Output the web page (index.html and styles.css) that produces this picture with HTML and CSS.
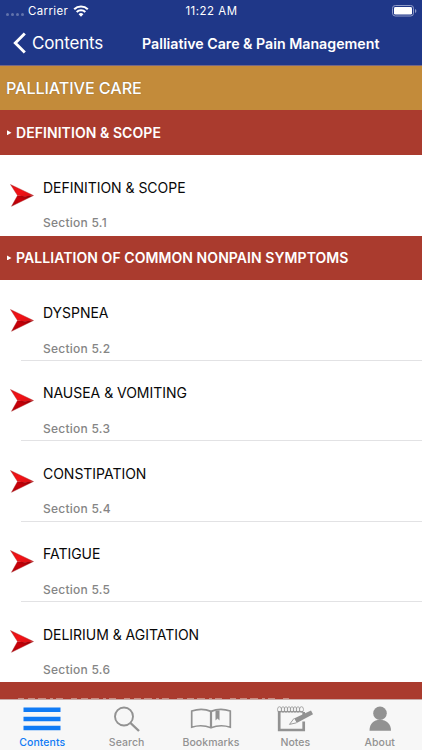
FILE: index.html
```
<!DOCTYPE html>
<html lang="en">
<head>
<meta charset="utf-8">
<title>Palliative Care &amp; Pain Management</title>
<link rel="stylesheet" href="styles.css">
</head>
<body>
<svg width="0" height="0" class="defs" aria-hidden="true">
  <defs>
    <linearGradient id="upper" x1="0" y1="0" x2="1" y2="1"><stop offset="0" stop-color="#e01014"/><stop offset=".5" stop-color="#f31216"/><stop offset="1" stop-color="#d81015"/></linearGradient>
    <linearGradient id="lower" x1="0" y1="1" x2="1" y2="0"><stop offset="0" stop-color="#a80008"/><stop offset=".5" stop-color="#cb0009"/><stop offset="1" stop-color="#8b0006"/></linearGradient>
    <symbol id="arrow" viewBox="0 0 24 23">
      <path d="M.5.5 23.5 11.5 15 12.6 7.5 11.5Z" fill="url(#upper)"/>
      <path d="M7.5 11.5 15 12.3 23.5 11.5 1.5 22.3Z" fill="url(#lower)"/>
      <path d="m.5.5 23 11-22 10.8 6-10.8Z" fill="none" stroke="#a83030" stroke-width=".4"/>
    </symbol>
  </defs>
</svg>
<div class="app">
  <header>
    <div class="status">
      <div class="carrier"><span class="dots"><i></i><i></i><i></i><i></i></span><span>Carrier</span>
        <svg class="wifi" width="16" height="12" viewBox="0 0 16 12"><path d="M1.2 4.3a9.7 9.7 0 0 1 13.6 0M3.7 7a6.1 6.1 0 0 1 8.6 0" fill="none" stroke="#fff" stroke-width="2.1"/><path d="m5.6 9.2 2.4 2.5 2.4-2.5a3.4 3.4 0 0 0-4.8 0Z" fill="#fff"/></svg>
      </div>
      <div class="time">11:22 AM</div>
      <svg class="battery" width="25" height="12" viewBox="0 0 25 12"><rect x=".5" y=".5" width="21" height="10.5" rx="2.8" fill="none" stroke="#8f9bc8"/><rect x="2" y="2" width="18" height="7.6" rx="1.4" fill="#fff"/><path d="M23 4v4q1.4-.6 1.4-2T23 4Z" fill="#8f9bc8"/></svg>
    </div>
    <nav class="bar">
      <a class="back"><svg width="14" height="22" viewBox="0 0 14 22"><path d="M11.8 1.5 2.3 11l9.5 9.5" fill="none" stroke="#fff" stroke-width="2.9"/></svg><span>Contents</span></a>
      <h1>Palliative Care &amp; Pain Management</h1>
    </nav>
  </header>
  <main>
    <h2 class="chapter"><span>PALLIATIVE CARE</span></h2>
    <h3 class="group"><i></i><span>DEFINITION &amp; SCOPE</span></h3>
    <div class="item last"><svg class="arrow"><use href="#arrow"/></svg><div><p class="name">DEFINITION &amp; SCOPE</p><p class="sec">Section 5.1</p></div></div>
    <h3 class="group"><i></i><span>PALLIATION OF COMMON NONPAIN SYMPTOMS</span></h3>
    <div class="item"><svg class="arrow"><use href="#arrow"/></svg><div><p class="name">DYSPNEA</p><p class="sec">Section 5.2</p></div></div>
    <div class="item"><svg class="arrow"><use href="#arrow"/></svg><div><p class="name">NAUSEA &amp; VOMITING</p><p class="sec">Section 5.3</p></div></div>
    <div class="item"><svg class="arrow"><use href="#arrow"/></svg><div><p class="name">CONSTIPATION</p><p class="sec">Section 5.4</p></div></div>
    <div class="item"><svg class="arrow"><use href="#arrow"/></svg><div><p class="name">FATIGUE</p><p class="sec">Section 5.5</p></div></div>
    <div class="item last"><svg class="arrow"><use href="#arrow"/></svg><div><p class="name">DELIRIUM &amp; AGITATION</p><p class="sec">Section 5.6</p></div></div>
    <div class="peek"><svg width="274" height="1" viewBox="0 0 274 1"><path d="M0 .5h274" stroke="#c98a80" stroke-dasharray="6 4 7 3 8 4 3 3 7 8"/></svg></div>
  </main>
  <footer>
    <a class="tab active"><svg width="40" height="27" viewBox="0 0 40 27"><path d="M1.5 3.8h37M1.5 13h37M1.5 22h37" stroke="#107bf5" stroke-width="4.4"/></svg><span>Contents</span></a>
    <a class="tab"><svg width="40" height="27" viewBox="0 0 40 27"><circle cx="17" cy="10.5" r="9" fill="none" stroke="#929292" stroke-width="1.9"/><path d="m23.5 17 8.5 8" stroke="#929292" stroke-width="2.4"/></svg><span>Search</span></a>
    <a class="tab"><svg width="42" height="27" viewBox="0 0 42 27"><g fill="none" stroke="#929292" stroke-width="1.7"><path d="M21 5.4Q12 1.4 1.7 5v16.2q10-3.2 19.3.6 9.3-3.8 19.3-.6V5Q30 1.4 21 5.4Z"/><path d="M21 5v16.5" stroke-width="2.2"/></g><path d="M25.5 4.5h4v10l-2-2-2 2Z" fill="#929292"/></svg><span>Bookmarks</span></a>
    <a class="tab"><svg width="40" height="27" viewBox="0 0 40 27"><path d="M4.2 5v19h24.5v-8.5M28.7 6v3" fill="none" stroke="#929292" stroke-width="2.7"/><path d="M4.5 5.7H28" stroke="#929292" stroke-width="1.2"/><g fill="none" stroke="#929292" stroke-width=".75"><ellipse cx="4.5" cy="3.5" rx="2" ry="2.8"/><ellipse cx="8" cy="3.5" rx="1.6" ry="2.8"/><ellipse cx="11" cy="3.5" rx="1.6" ry="2.8"/><ellipse cx="14" cy="3.5" rx="1.6" ry="2.8"/><ellipse cx="17" cy="3.5" rx="1.6" ry="2.8"/><ellipse cx="20" cy="3.5" rx="1.6" ry="2.8"/><ellipse cx="23" cy="3.5" rx="1.6" ry="2.8"/><ellipse cx="26.5" cy="3.5" rx="2" ry="2.8"/></g><path d="m19 12.4 17-8 2 3.8-16.3 8.8Z" fill="#929292"/><path d="m19 12.4-4.5 6 7-1.6" fill="#f7f7f7" stroke="#929292" stroke-width=".9"/></svg><span>Notes</span></a>
    <a class="tab"><svg width="40" height="27" viewBox="0 0 40 27"><circle cx="20" cy="7.3" r="6.8" fill="#929292"/><path d="M9.5 24.8c0-7 4-11 10.5-11s11 4 11 11Z" fill="#929292"/></svg><span>About</span></a>
  </footer>
</div>
</body>
</html>
```
FILE: styles.css
```
* { box-sizing: border-box; margin: 0; padding: 0; }
body { width: 422px; height: 750px; overflow: hidden; background: #fff; font-family: Inter, "Liberation Sans", sans-serif; }
.defs { position: absolute; }
.app { height: 750px; display: flex; flex-direction: column; }
header { height: 66px; flex: none; background: #1f3788; color: #fff; border-bottom: 1px solid #766784; }
.status { height: 21px; display: grid; grid-template-columns: 1fr auto 1fr; align-items: center; font-size: 11.4px; padding: 0 5px 0 6px; }
.carrier { display: flex; align-items: center; letter-spacing: .4px; }
.dots { display: flex; gap: 2px; width: 22px; padding-top: 7px; }
.dots i { width: 3px; height: 3px; border-radius: 50%; background: #6273ac; }
.wifi { margin-left: 5px; }
.time { letter-spacing: .55px; }
.battery { justify-self: end; }
.bar { height: 44px; display: flex; align-items: center; }
.back { width: 142px; padding-left: 13px; display: flex; align-items: center; gap: 5px; font-size: 17px; letter-spacing: -.15px; }
h1 { font-size: 14.2px; font-weight: 600; white-space: nowrap; }
main { flex: 1; min-height: 0; overflow: hidden; }
.chapter { height: 44.4px; padding: 0 6px; background: #c38b3a; color: #fff; font-size: 16.2px; font-weight: 500; line-height: 44px; letter-spacing: -.1px; text-shadow: 0 0 1px #765d3b; white-space: nowrap; }
.group { height: 44.8px; padding-left: 7px; display: flex; align-items: center; background: #aa3b2e; color: #fff; font-size: 14px; font-weight: 600; letter-spacing: .07px; white-space: nowrap; }
.group i { width: 9px; height: 5px; background: #fff; clip-path: polygon(0 0, 4.5px 50%, 0 100%); }
.item { height: 80.4px; margin-left: 21px; border-bottom: 1px solid #e2e2e4; display: flex; }
.item.last { border-bottom-color: transparent; }
.arrow { width: 24px; height: 23px; margin: 28.4px 9px 0 -11px; flex: none; }
.name { margin-top: 22.6px; font-size: 14px; line-height: 20px; letter-spacing: -.03px; color: #080808; white-space: nowrap; }
.sec { margin-top: 17.6px; font-size: 12px; line-height: 16px; font-weight: 500; color: #858585; letter-spacing: .25px; }
.peek { height: 45px; padding: 16px 0 0 18px; background: #aa3b2e; }
.peek svg { display: block; }
footer { height: 51px; flex: none; background: #f7f7f7; display: grid; grid-template-columns: repeat(5, 1fr); border-top: 1px solid #c9aaa7; }
.tab { display: flex; flex-direction: column; align-items: center; padding-top: 6px; font-size: 10.5px; font-weight: 500; line-height: 19px; letter-spacing: .05px; color: #929292; }
.active { color: #107bf5; }
```
